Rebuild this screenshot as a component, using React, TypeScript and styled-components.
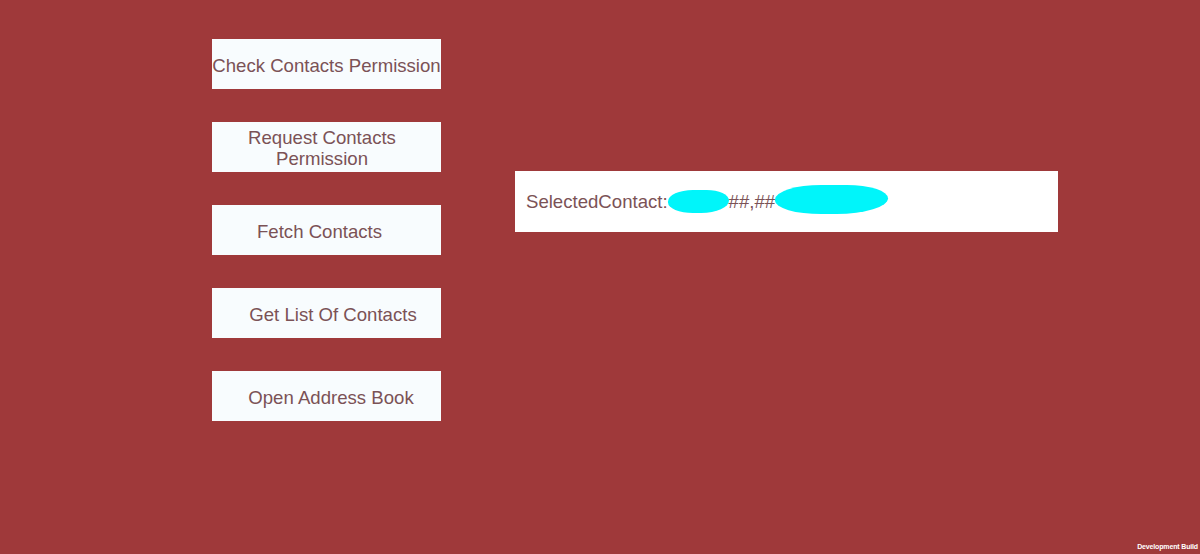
import styled, { createGlobalStyle } from "styled-components";

const BACKGROUND = "#9f393a";
const BUTTON_COLOR = "#f8fcfe";
const TEXT_COLOR = "#7b5256";
const REDACT_COLOR = "#00f5fa";

const buttons: { label: string; shift: number }[] = [
  { label: "Check Contacts Permission", shift: 0 },
  { label: "Request Contacts Permission", shift: -9 },
  { label: "Fetch Contacts", shift: -14 },
  { label: "Get List Of Contacts", shift: 13 },
  { label: "Open Address Book", shift: 9 },
];

export default function App() {
  return (
    <>
      <GlobalStyle />
      <Screen>
        <ButtonColumn>
          {buttons.map((b) => (
            <ActionButton key={b.label} $shift={b.shift}>
              <ButtonLabel>{b.label}</ButtonLabel>
            </ActionButton>
          ))}
        </ButtonColumn>
        <ContactPanel>
          <ContactText>
            SelectedContact:
            <Redact $width={61} $height={23} $lift={1}>c</Redact>
            ##,##
            <Redact $width={113} $height={29} $lift={3}>s</Redact>
          </ContactText>
        </ContactPanel>
        <BuildTag>Development Build</BuildTag>
      </Screen>
    </>
  );
}

const GlobalStyle = createGlobalStyle`
  html, body {
    margin: 0;
    padding: 0;
    background: ${BACKGROUND};
  }
  body {
    font-family: "Liberation Sans", Arial, sans-serif;
  }
`;

const Screen = styled.div`
  position: relative;
  width: 1200px;
  height: 554px;
  background: ${BACKGROUND};
  display: flex;
  align-items: flex-start;
  padding: 39px 0 0 212px;
  box-sizing: border-box;
  overflow: hidden;
`;

const ButtonColumn = styled.div`
  display: flex;
  flex-direction: column;
  gap: 33px;
  width: 229px;
`;

const ActionButton = styled.button<{ $shift: number }>`
  height: 50px;
  width: 229px;
  border: none;
  margin: 0;
  background: ${BUTTON_COLOR};
  display: flex;
  align-items: center;
  justify-content: center;
  padding: 2px ${(p) => (p.$shift < 0 ? -p.$shift : 0)}px 0
    ${(p) => (p.$shift > 0 ? p.$shift : 0)}px;
  box-sizing: border-box;
  cursor: pointer;
`;

const ButtonLabel = styled.span`
  font-family: "Liberation Sans", Arial, sans-serif;
  font-size: 18.6px;
  line-height: 21px;
  color: ${TEXT_COLOR};
  text-align: center;
  max-width: 180px;
  white-space: normal;

  ${ActionButton}:first-child & {
    max-width: none;
    white-space: nowrap;
  }
`;

const ContactPanel = styled.div`
  margin: 132px 0 0 74px;
  width: 543px;
  height: 61px;
  background: #ffffff;
  display: flex;
  align-items: center;
  padding: 1px 0 0 11px;
  box-sizing: border-box;
`;

const ContactText = styled.div`
  font-size: 18.6px;
  color: ${TEXT_COLOR};
  display: flex;
  align-items: center;
  white-space: nowrap;
`;

const Redact = styled.span<{ $width: number; $height: number; $lift: number }>`
  display: inline-block;
  width: ${(p) => p.$width}px;
  height: ${(p) => p.$height}px;
  margin-top: ${(p) => -p.$lift * 2}px;
  background: ${REDACT_COLOR};
  color: transparent;
  border-radius: 45% 40% 50% 45% / 55% 50% 60% 50%;
  overflow: hidden;
`;

const BuildTag = styled.div`
  position: absolute;
  right: 2px;
  bottom: 4px;
  font-family: "Liberation Sans", Arial, sans-serif;
  font-size: 7px;
  font-weight: bold;
  color: #ffffff;
  letter-spacing: -0.15px;
`;
